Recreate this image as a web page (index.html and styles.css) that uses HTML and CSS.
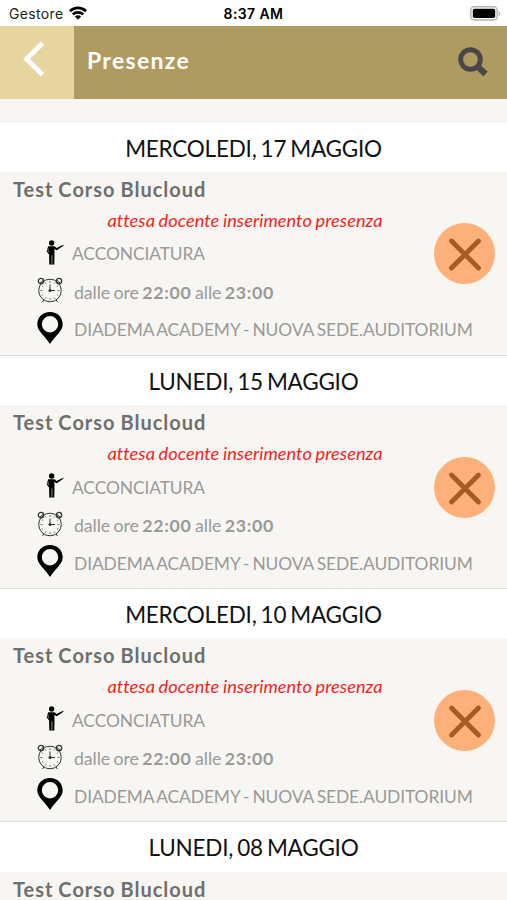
FILE: index.html
```
<!DOCTYPE html>
<html lang="it">
<head>
  <meta charset="utf-8">
  <title>Presenze</title>
  <link rel="stylesheet" href="styles.css">
</head>
<body>
  <!-- Icons shared by the lessons -->
  <svg class="sprite">
    <symbol id="teacher" viewBox="0 0 20 26">
      <circle cx="7" cy="3" r="2.8"/>
      <path d="M3.4 6.300h6.600l2.200 2 5.800-2.900 1.600-.5-.3.9-6.800 4.700-2.600-1.200.1 6.200-.2 10H4.500l-.2-10.500-2.600-3.400z"/>
      <path d="M7.300 16v9" stroke="#f8f6f2" stroke-width=".6"/>
      <path d="M3.500 9.200l-.5 1.900 1.200 1.500" fill="none" stroke="#f8f6f2" stroke-width=".6"/>
    </symbol>
    <symbol id="clock" viewBox="0 0 26 26">
      <g fill="none" stroke="#333" stroke-width="1">
        <circle cx="13" cy="13.5" r="11.300"/>
        <circle cx="4" cy="4" r="2.700" stroke-width="1.300"/>
        <circle cx="22" cy="4" r="2.700" stroke-width="1.300"/>
        <path d="M2 7l5-4.500M24 7l-5-4.500M7 23l-1.500 2M19 23l1.500 2"/>
        <path d="M13 4v2M13 21v2M3.500 13.500h2M20.500 13.500h2M8.200 5.300l.8 1.300M17.800 5.300l-.8 1.300M4.800 8.800l1.300.7M21.200 8.800l-1.300.7M4.800 18.300l1.300-.8M21.200 18.300l-1.300-.8M8.200 21.800l.8-1.400M17.800 21.800l-.8-1.400" stroke-width=".7"/>
        <path d="M13 7.500v6h5"/>
      </g>
      <circle cx="13" cy="13.500" r="1.500" fill="#333"/>
    </symbol>
    <symbol id="pin" viewBox="0 0 26 32">
      <path fill-rule="evenodd" d="M13 0C5.600 0 .3 5.400.3 12.200.3 19 7 22.500 13 32c6-9.500 12.700-13 12.700-19.800C25.700 5.400 20.400 0 13 0zm0 4a8.200 8.200 0 1 1 0 16.400A8.200 8.200 0 0 1 13 4z"/>
    </symbol>
    <symbol id="cross" viewBox="0 0 61 61">
      <path d="M17.500 18l27 27M44.500 18l-27 27" fill="none" stroke="#a65a25" stroke-width="4.800" stroke-linecap="round"/>
    </symbol>
  </svg>

  <div class="statusbar">
    <div class="carrier">
      <span>Gestore</span>
      <svg class="wifi" viewBox="0 0 18 14">
        <g fill="none" stroke="#000" stroke-width="2.700">
          <path d="M.9 5.200a11.600 11.600 0 0 1 16.200 0"/>
          <path d="M3.800 8.400a7.500 7.500 0 0 1 10.400 0"/>
        </g>
        <path d="M9 13.700L5.900 10.600a4.400 4.400 0 0 1 6.200 0z"/>
      </svg>
    </div>
    <div class="time">8:37 AM</div>
    <div class="power">
      <svg class="battery" viewBox="0 0 31 15">
        <rect x=".8" y=".8" width="26.400" height="13.200" rx="3.600" fill="#fff" stroke="#b5b5b5" stroke-width="1.500"/>
        <rect x="2.800" y="2.800" width="22.400" height="9.200" rx="1.800"/>
        <path d="M28.700 5v5c2-.8 2-4.200 0-5z" fill="#b5b5b5"/>
      </svg>
    </div>
  </div>

  <div class="navbar">
    <div class="back">
      <svg viewBox="0 0 22 36"><path d="M19.500 2.200L3.500 18l16 15.800" fill="none" stroke="#fff" stroke-width="4.800"/></svg>
    </div>
    <h1>Presenze</h1>
    <svg class="search" viewBox="0 0 30 30">
      <g fill="none" stroke="#4a4547">
        <circle cx="12.500" cy="12.500" r="9.800" stroke-width="4.900"/>
        <path d="M18.500 18.500l9 8.600" stroke-width="6.200"/>
      </g>
    </svg>
  </div>

  <div class="list">
    <h2>MERCOLEDI, 17 MAGGIO</h2>
    <div class="lesson">
      <h3>Test Corso Blucloud</h3>
      <p class="status">attesa docente inserimento presenza</p>
      <div class="row subject">
        <svg class="teacher"><use href="#teacher"/></svg>
        <span>ACCONCIATURA</span>
        <svg class="absent"><use href="#cross"/></svg>
      </div>
      <div class="row hours">
        <svg class="clock"><use href="#clock"/></svg>
        <span>dalle ore <b>22:00</b> alle <b>23:00</b></span>
      </div>
      <div class="row place">
        <svg class="pin"><use href="#pin"/></svg>
        <span>DIADEMA ACADEMY - NUOVA SEDE.AUDITORIUM</span>
      </div>
    </div>

    <h2>LUNEDI, 15 MAGGIO</h2>
    <div class="lesson">
      <h3>Test Corso Blucloud</h3>
      <p class="status">attesa docente inserimento presenza</p>
      <div class="row subject">
        <svg class="teacher"><use href="#teacher"/></svg>
        <span>ACCONCIATURA</span>
        <svg class="absent"><use href="#cross"/></svg>
      </div>
      <div class="row hours">
        <svg class="clock"><use href="#clock"/></svg>
        <span>dalle ore <b>22:00</b> alle <b>23:00</b></span>
      </div>
      <div class="row place">
        <svg class="pin"><use href="#pin"/></svg>
        <span>DIADEMA ACADEMY - NUOVA SEDE.AUDITORIUM</span>
      </div>
    </div>

    <h2>MERCOLEDI, 10 MAGGIO</h2>
    <div class="lesson">
      <h3>Test Corso Blucloud</h3>
      <p class="status">attesa docente inserimento presenza</p>
      <div class="row subject">
        <svg class="teacher"><use href="#teacher"/></svg>
        <span>ACCONCIATURA</span>
        <svg class="absent"><use href="#cross"/></svg>
      </div>
      <div class="row hours">
        <svg class="clock"><use href="#clock"/></svg>
        <span>dalle ore <b>22:00</b> alle <b>23:00</b></span>
      </div>
      <div class="row place">
        <svg class="pin"><use href="#pin"/></svg>
        <span>DIADEMA ACADEMY - NUOVA SEDE.AUDITORIUM</span>
      </div>
    </div>

    <h2>LUNEDI, 08 MAGGIO</h2>
    <div class="lesson last">
      <h3>Test Corso Blucloud</h3>
    </div>
  </div>
</body>
</html>
```

FILE: styles.css
```
* {
  box-sizing: border-box;
}
body {
  margin: 0;
  height: 900px;
  overflow: hidden;
  display: flex;
  flex-direction: column;
  background-color: #f8f6f2;
  font-family: Lato, sans-serif;
}
h1, h2, h3, p {
  margin: 0;
}
svg {
  display: block;
  flex-shrink: 0;
}
.sprite {
  display: none;
}

/* Phone status bar */
.statusbar {
  display: grid;
  grid-template-columns: 1fr auto 1fr;
  align-items: center;
  height: 25.5px;
  flex-shrink: 0;
  padding: 2px 6px 0 9px;
  background-color: white;
  font-family: Inter, sans-serif;
  font-size: 14px;
}
.carrier {
  display: flex;
  align-items: center;
  gap: 5px;
  color: #222;
  letter-spacing: 0.35px;
}
.wifi {
  width: 18px;
  height: 14px;
  margin-top: -2px;
}
.time {
  margin-right: 3px;
  font-weight: 600;
  letter-spacing: 0.4px;
}
.power {
  display: flex;
  justify-content: flex-end;
}
.battery {
  width: 31px;
  height: 15px;
  margin-top: -1px;
}

/* Title bar */
.navbar {
  display: flex;
  align-items: center;
  height: 73px;
  flex-shrink: 0;
  padding-right: 19px;
  background-color: #ae9b61;
}
.back {
  display: flex;
  align-items: center;
  width: 74px;
  height: 100%;
  padding: 0 0 7px 23px;
  background-color: #e7d59f;
}
.back svg {
  width: 22px;
  height: 36px;
}
.navbar h1 {
  flex: 1;
  padding: 0 0 5px 13px;
  color: white;
  font-size: 23px;
  letter-spacing: 1.3px;
}
.search {
  width: 30px;
  height: 30px;
  margin-top: -1px;
}

/* Days and lessons */
.list {
  padding-top: 24px;
}
h2 {
  height: 49.33px;
  background-color: white;
  color: #111;
  font-size: 22.5px;
  font-weight: 400;
  letter-spacing: -0.22px;
  line-height: 51px;
  text-align: center;
  word-spacing: -1.5px;
}
.lesson {
  height: 184px;
  padding-top: 2px;
  border-bottom: 1px solid #ddd;
}
.last {
  height: 30px;
  overflow: hidden;
  border: none;
}
h3 {
  padding-left: 13px;
  color: #6f6f6d;
  font-size: 20px;
  letter-spacing: 1px;
  line-height: 30px;
  word-spacing: -1px;
}
.status {
  padding-right: 17px;
  color: #f51d1d;
  font-size: 18.2px;
  font-style: italic;
  letter-spacing: 0.05px;
  line-height: 32px;
  margin-bottom: -1px;
  text-align: center;
  word-spacing: -0.7px;
}
.row {
  display: flex;
  align-items: center;
  height: 38px;
  padding-left: 37px;
  color: #9a9a98;
  font-size: 17.4px;
  letter-spacing: -0.1px;
  word-spacing: -1.3px;
}
.subject {
  padding-left: 45px;
}
.hours {
  font-size: 17.8px;
  word-spacing: -1px;
}
.hours b {
  letter-spacing: 0.7px;
}
.teacher {
  width: 19px;
  height: 25px;
  margin: -3px 8px 0 0;
}
.clock {
  width: 26px;
  height: 26px;
  margin: -3px 11px 0 0;
}
.pin {
  width: 26px;
  height: 32px;
  margin: -4px 11px 0 0;
}
.absent {
  width: 61px;
  height: 61px;
  margin: 0 12px 0 auto;
  border-radius: 50%;
  background-color: #feb07b;
}
```
